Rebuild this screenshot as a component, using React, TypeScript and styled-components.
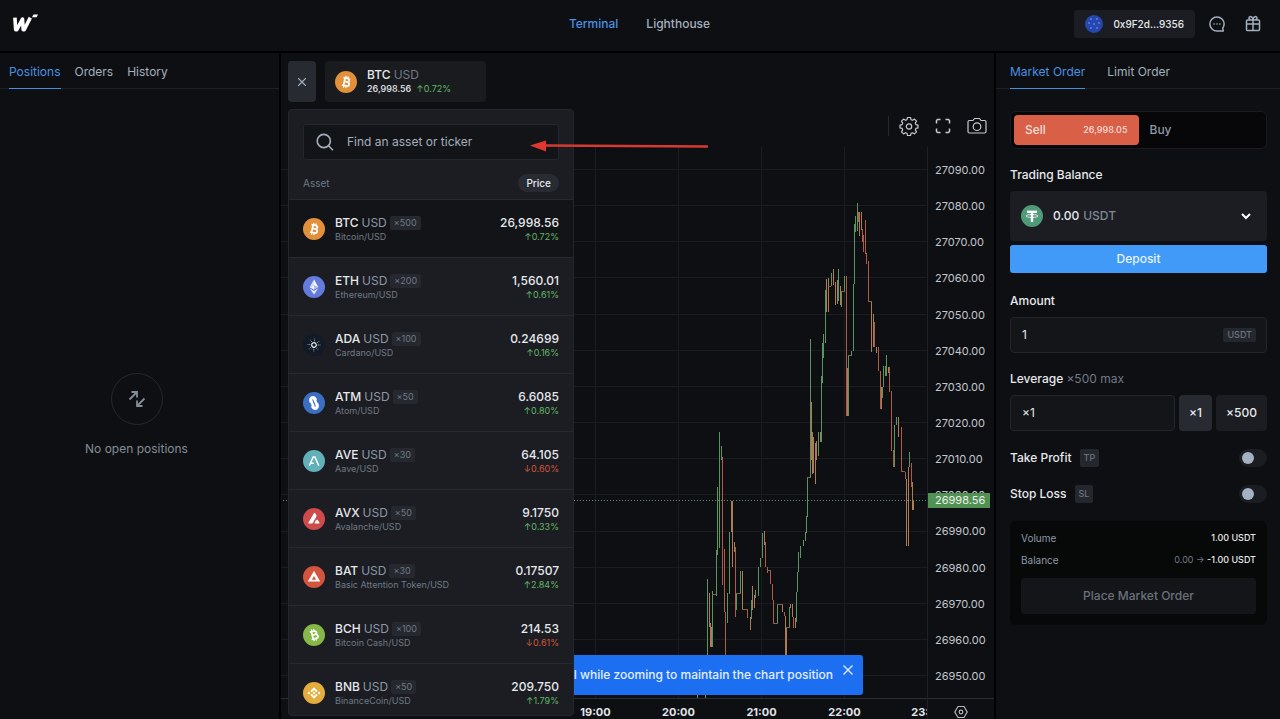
import React from "react";
import styled, { createGlobalStyle } from "styled-components";

const c = {
  bg: "#0e0f13",
  line: "#1d2025",
  card: "#1b1d22",
  raised: "#272a31",
  text: "#e6e9ed",
  soft: "#a4afbd",
  muted: "#707985",
  blue: "#4a90e2",
  action: "#419af8",
  green: "#62b866",
  red: "#d4553a",
};

const GlobalStyle = createGlobalStyle`
  *, *::before, *::after { box-sizing: border-box; }
  body {
    margin: 0;
    background: #000;
    color: ${c.text};
    font-family: Inter, "Liberation Sans", sans-serif;
    font-size: 12px;
    line-height: 16px;
    -webkit-font-smoothing: antialiased;
  }
  button, input, select { font: inherit; color: inherit; margin: 0; padding: 0; border: 0; background: none; }
  button { cursor: pointer; }
  a { color: inherit; text-decoration: none; }
  svg { display: block; flex: none; }
`;

const Page = styled.div`
  display: flex;
  flex-direction: column;
  gap: 2px;
  height: 100vh;
  min-height: 640px;
  overflow: hidden;
`;

const Header = styled.header`
  display: grid;
  grid-template-columns: 1fr auto 1fr;
  align-items: center;
  height: 51px;
  flex: none;
  padding: 0 13px 4px 12px;
  background: ${c.bg};
`;

const Nav = styled.nav`
  display: flex;
  gap: 28px;
`;

const NavLink = styled.a<{ $active?: boolean }>`
  font-weight: 500;
  color: ${(p) => (p.$active ? c.blue : c.soft)};
`;

const Actions = styled.div`
  display: flex;
  justify-content: flex-end;
  align-items: center;
  gap: 8px;
`;

const Account = styled.button`
  display: flex;
  align-items: center;
  gap: 10px;
  height: 28px;
  padding: 0 11px;
  border-radius: 4px;
  background: ${c.card};
  font-size: 10px;
  font-weight: 500;
`;

const IconButton = styled.button`
  display: grid;
  place-items: center;
  width: 28px;
  height: 28px;
  color: ${c.soft};
`;

const Columns = styled.main`
  display: grid;
  grid-template-columns: 279px minmax(0, 1fr) 284px;
  gap: 2px;
  flex: 1;
  min-height: 0;
`;

const Panel = styled.section`
  display: flex;
  flex-direction: column;
  min-width: 0;
  background: ${c.bg};
`;

const Tabs = styled.div<{ $gap: number; $pad: number }>`
  display: flex;
  gap: ${(p) => p.$gap}px;
  height: 36px;
  flex: none;
  padding: 0 ${(p) => p.$pad}px;
  border-bottom: 1px solid ${c.line};
`;

const Tab = styled.button<{ $active?: boolean }>`
  height: 36px;
  padding-top: 2px;
  border-bottom: 1px solid ${(p) => (p.$active ? c.blue : "transparent")};
  color: ${(p) => (p.$active ? c.blue : c.soft)};
`;

const Empty = styled.div`
  display: flex;
  flex-direction: column;
  flex: 1;
  align-items: center;
  justify-content: center;
  gap: 16px;
  padding: 22px 6px 0 0;
  color: #848c97;
`;

const EmptyRing = styled.div`
  display: grid;
  place-items: center;
  width: 52px;
  height: 52px;
  border: 1px solid #25282d;
  border-radius: 50%;
`;

const ChartPanel = styled(Panel)`
  position: relative;
`;

const TickerBar = styled.div`
  display: flex;
  gap: 9px;
  padding: 8px 7px 0;
`;

const CloseButton = styled.button`
  display: grid;
  place-items: center;
  width: 28px;
  height: 41px;
  border-radius: 4px;
  background: ${c.raised};
  color: ${c.soft};
`;

const Ticker = styled.div`
  display: flex;
  align-items: center;
  gap: 10px;
  width: 161px;
  height: 41px;
  padding-left: 10px;
  border-radius: 4px;
  background: #191b1f;
`;

const TickerName = styled.div`
  font-weight: 500;
  line-height: 14px;
  span { color: ${c.muted}; font-weight: 400; }
`;

const TickerPrice = styled.div`
  display: flex;
  gap: 5px;
  font-size: 9px;
  line-height: 14px;
  font-weight: 500;
`;

const Change = styled.span<{ $down?: boolean }>`
  color: ${(p) => (p.$down ? c.red : c.green)};
  font-size: 9px;
  line-height: 14px;
  font-weight: 400;
`;

const ChartTools = styled.div`
  display: flex;
  justify-content: flex-end;
  align-items: center;
  gap: 14px;
  height: 45px;
  padding: 2px 7px 0;
  color: #c5c9d0;
`;

const ToolDivider = styled.span`
  width: 1px;
  height: 20px;
  margin-right: -4px;
  background: #25282e;
`;

const ToolButton = styled.button`
  display: grid;
  place-items: center;
  width: 20px;
  height: 20px;
`;

const ChartGrid = styled.div`
  display: grid;
  grid-template-columns: minmax(0, 1fr) 67px;
  grid-template-rows: minmax(0, 1fr) 21px;
  flex: 1;
  min-height: 0;
`;

const Plot = styled.div`
  overflow: hidden;
  svg { width: 100%; }
`;

const PriceAxis = styled.div`
  position: relative;
  display: flex;
  flex-direction: column;
  justify-content: space-between;
  padding: 15px 8px 14px 7px;
  border-left: 1px solid ${c.line};
  font-size: 11px;
  color: #c3c7cd;
`;

const LastPrice = styled.div`
  position: absolute;
  top: 346px;
  left: 0;
  width: 62px;
  padding: 0 7px;
  background: #529154;
  color: #e8f2e8;
  line-height: 15px;
`;

const TimeAxis = styled.div`
  display: flex;
  justify-content: flex-end;
  overflow: hidden;
  border-top: 1px solid #2a2d33;
  padding-top: 5px;
  font-size: 11px;
  font-weight: 700;
  color: #e2e4e8;
  span { flex: none; width: 83px; text-align: center; }
  span:last-child { margin-right: -42px; }
`;

const AxisCorner = styled.div`
  display: grid;
  place-items: center;
  border-top: 1px solid #2a2d33;
  border-left: 1px solid ${c.line};
  padding-top: 6px;
`;

const Toast = styled.div`
  position: absolute;
  right: 131px;
  bottom: 24px;
  display: flex;
  gap: 9px;
  width: 518px;
  height: 40px;
  padding: 0 9px 0 12px;
  justify-content: flex-end;
  border-radius: 3px;
  background: #1d6ff2;
  color: #e4eeff;
  font-weight: 500;
  line-height: 40px;
  white-space: nowrap;
  button { height: 12px; margin-top: 9px; }
`;

const AssetMenu = styled.div`
  position: absolute;
  z-index: 2;
  top: 56px;
  left: 7px;
  bottom: 3px;
  width: 286px;
  overflow: hidden;
  border: 1px solid #23262c;
  border-radius: 4px;
  background: ${c.card};
`;

const SearchBox = styled.label`
  display: flex;
  align-items: center;
  gap: 12px;
  height: 36px;
  margin: 14px 14px 0;
  padding: 0 11px;
  border: 1px solid #24272d;
  border-radius: 3px;
  background: #131418;
  color: ${c.soft};
  input {
    flex: 1;
    min-width: 0;
    outline: none;
  }
  input::placeholder { color: ${c.soft}; opacity: 1; }
`;

const ListHead = styled.div`
  display: flex;
  justify-content: space-between;
  align-items: center;
  height: 40px;
  padding: 6px 14px 0;
  border-bottom: 1px solid #262930;
  font-size: 10px;
  color: ${c.muted};
`;

const PricePill = styled.button`
  height: 18px;
  padding: 0 8px;
  border-radius: 9px;
  background: #282b32;
  color: ${c.text};
  font-weight: 500;
`;

const AssetList = styled.ul`
  margin: 0;
  padding: 0;
  list-style: none;
`;

const AssetRow = styled.li<{ $active?: boolean }>`
  display: flex;
  align-items: center;
  gap: 10px;
  height: 58px;
  padding: 0 14px;
  border-bottom: 1px solid #262930;
  background: ${(p) => (p.$active ? "#131417" : "transparent")};
`;

const AssetText = styled.div`
  flex: 1;
  small {
    display: block;
    font-size: 9px;
    line-height: 12px;
    color: ${c.muted};
  }
`;

const AssetName = styled.div`
  display: flex;
  align-items: center;
  gap: 3px;
  font-weight: 500;
  > span { color: #8b98a8; font-weight: 400; }
`;

const Multiplier = styled.em`
  padding: 0 4px;
  border-radius: 2px;
  background: #25282e;
  color: ${c.muted};
  font-size: 9px;
  line-height: 14px;
  font-style: normal;
  font-weight: 400;
`;

const AssetPrice = styled.div`
  display: flex;
  flex-direction: column;
  align-items: flex-end;
  font-weight: 500;
  ${Change} { line-height: 12px; }
`;

const Annotation = styled.svg`
  position: absolute;
  z-index: 3;
  top: 86px;
  left: 249px;
`;

const Form = styled.form`
  display: flex;
  flex-direction: column;
  padding: 22px 13px 0 14px;
`;

const SideToggle = styled.div`
  display: flex;
  height: 38px;
  padding: 3px;
  border: 1px solid #191b1f;
  border-radius: 6px;
  background: #070709;
`;

const SideButton = styled.button<{ $active?: boolean }>`
  display: flex;
  flex: 1;
  justify-content: space-between;
  align-items: center;
  padding: 0 11px;
  border-radius: 4px;
  background: ${(p) => (p.$active ? "#d95f47" : "transparent")};
  color: ${(p) => (p.$active ? "#f6ded9" : "#8e99a7")};
  font-weight: 500;
  small { font-size: 9px; }
`;

const FieldLabel = styled.label<{ $top: number }>`
  margin: ${(p) => p.$top}px 0 8px;
  font-weight: 500;
  span { color: ${c.muted}; font-weight: 400; }
`;

const BalanceBox = styled.div`
  display: flex;
  align-items: center;
  gap: 4px;
  height: 50px;
  padding: 0 15px 0 11px;
  border-radius: 4px;
  background: ${c.card};
  font-weight: 500;
  output { margin-left: 6px; }
  select { flex: 1; appearance: none; color: #7e8894; outline: none; }
`;

const Deposit = styled.button`
  height: 28px;
  margin-top: 4px;
  border-radius: 3px;
  background: ${c.action};
  color: #e6f2ff;
  font-weight: 500;
`;

const InputBox = styled.div`
  display: flex;
  align-items: center;
  flex: 1 0 auto;
  height: 36px;
  padding: 0 10px 0 11px;
  border: 1px solid #222529;
  border-radius: 4px;
  background: #141519;
  input { flex: 1; min-width: 0; width: 0; outline: none; }
`;

const Badge = styled.span<{ $tall?: boolean }>`
  padding: 0 4px;
  border-radius: 2px;
  background: #24272d;
  color: #6b7480;
  font-size: 9px;
  font-weight: 500;
  line-height: ${(p) => (p.$tall ? 18 : 14)}px;
`;

const LeverageRow = styled.div`
  display: flex;
  gap: 4px;
`;

const QuickButton = styled.button<{ $active?: boolean }>`
  height: 36px;
  padding: 0 10px;
  border-radius: 4px;
  background: ${(p) => (p.$active ? c.raised : c.card)};
  font-weight: 500;
`;

const SwitchRow = styled.label`
  display: flex;
  align-items: center;
  gap: 8px;
  height: 18px;
  margin-top: 18px;
  font-weight: 500;
`;

const Switch = styled.input`
  appearance: none;
  width: 28px;
  height: 18px;
  margin: 0 0 0 auto;
  border-radius: 9px;
  background: ${c.card};
  &::before {
    content: "";
    display: block;
    width: 12px;
    height: 12px;
    margin: 3px;
    border-radius: 50%;
    background: #a3b1c2;
  }
  &:checked::before { margin-left: 13px; }
`;

const Summary = styled.div`
  display: flex;
  flex-direction: column;
  gap: 6px;
  margin-top: 18px;
  padding: 9px 11px 11px;
  border-radius: 6px;
  background: #070808;
`;

const SummaryRow = styled.div`
  display: flex;
  justify-content: space-between;
  font-size: 10px;
  color: #8e99a7;
  b { color: ${c.text}; font-size: 9px; font-weight: 500; }
  b span { color: ${c.muted}; font-weight: 400; }
`;

const Submit = styled.button`
  height: 36px;
  margin-top: 4px;
  border-radius: 3px;
  background: #141518;
  color: #6a727d;
  font-weight: 500;
`;

type CoinId = "btc" | "eth" | "ada" | "atm" | "ave" | "avx" | "bat" | "bch" | "bnb" | "usdt";

const coinFill: Record<CoinId, string> = {
  btc: "#e2903a", eth: "#627bdc", ada: "#111a26", atm: "#3c6fc4", ave: "#62b0b8",
  avx: "#cf4a4b", bat: "#d4543d", bch: "#86b848", bnb: "#e3ac3c", usdt: "#4f9a78",
};

const bitcoinMark = (
  <g fill="none" stroke="#fff" strokeWidth="1.7" strokeLinejoin="round">
    <path d="M7.6 7.2h4.1c3 0 3 3.6 0 3.6H9.2M9.3 7.2v7.6M7.6 14.8h4.5c3.4 0 3.4-4 0-4" />
    <path d="M9.7 5v2M12 5v2M9.7 15v2M12 15v2" strokeWidth="1.2" />
  </g>
);

const coinMark: Record<CoinId, React.ReactNode> = {
  btc: <g transform="rotate(12 11 11)">{bitcoinMark}</g>,
  bch: <g transform="rotate(-14 11 11)">{bitcoinMark}</g>,
  eth: (
    <g fill="#fff">
      <path d="M11 3.5 6.6 11.2 11 9.3z" opacity=".75" />
      <path d="m11 3.5 4.4 7.7L11 9.3z" opacity=".95" />
      <path d="M11 9.3v4.5l-4.4-2.6z" opacity=".9" />
      <path d="M11 9.3v4.5l4.4-2.6z" opacity=".5" />
      <path d="M6.6 12.3 11 18.5v-3.6zM15.4 12.3 11 18.5v-3.6z" opacity=".85" />
    </g>
  ),
  ada: (
    <g fill="none" stroke="#e4eaf0" strokeLinecap="round">
      <circle cx="11" cy="11" r="2.3" strokeWidth="1.3" strokeDasharray="1.6 .8" />
      <circle cx="11" cy="11" r="4.3" strokeWidth="1" strokeDasharray=".1 3.28" />
      <circle cx="11" cy="11" r="6" strokeWidth=".9" strokeDasharray=".1 4.61" opacity=".7" />
    </g>
  ),
  atm: (
    <g fill="none" stroke="#fff" strokeWidth="3.2" strokeLinecap="round" strokeLinejoin="round">
      <path d="M8 9.600C7.200 7.800 8 5.600 10 5.600c1.200 0 1.700.6 2.200 1.600" />
      <path d="M14 12.400c.8 1.800 0 4-2 4-1.200 0-1.700-.6-2.200-1.600" />
      <path d="m8 8.800 2.200 5M11.800 8l2.200 5" strokeWidth="2.600" />
    </g>
  ),
  ave: <path d="M6.500 15.300 10.200 7h1.700l3.700 8.300M7.900 13.200h2.300" fill="none" stroke="#fff" strokeWidth="1.400" strokeLinecap="round" />,
  avx: <path d="M10.900 5.200c.4-.7 1-.7 1.400 0l1 1.900c.3.600.3 1.100 0 1.700l-3.400 5.900c-.4.600-.8.900-1.500.9H6.200c-.8 0-1-.5-.7-1.100zM13.300 12c.4-.7 1-.7 1.400 0l1.700 2.600c.3.600 0 1-.6 1h-3.500c-.7 0-1-.4-.6-1z" fill="#fff" />,
  bat: <path fillRule="evenodd" d="m11 4.800 6.200 10.800H4.800zm0 5.200-2.200 3.700h4.400z" fill="#fff" />,
  bnb: (
    <g fill="#fff">
      <path d="m11 5.200 3.700 3.700-1.400 1.400L11 8l-2.300 2.300-1.400-1.400zM11 16.800l3.700-3.700-1.400-1.400L11 14l-2.300-2.300-1.400 1.400z" />
      <path d="m11 9.600 1.400 1.400-1.400 1.400L9.600 11zM5.900 9.600 7.300 11l-1.400 1.400L4.500 11zM16.100 9.600l1.400 1.400-1.400 1.400-1.400-1.400z" />
    </g>
  ),
  usdt: (
    <g fill="none" stroke="#fff">
      <path d="M6 6.800h10" strokeWidth="2.400" />
      <path d="M11 7v10" strokeWidth="2.400" />
      <ellipse cx="11" cy="11" rx="6" ry="1.500" strokeWidth=".8" />
    </g>
  ),
};

const Coin = ({ id }: { id: CoinId }) => (
  <svg width="22" height="22" viewBox="0 0 22 22" aria-hidden="true">
    <circle cx="11" cy="11" r="11" fill={coinFill[id]} />
    {coinMark[id]}
  </svg>
);

const Close = ({ size }: { size: number }) => (
  <svg width={size} height={size} viewBox="0 0 12 12" fill="none" stroke="currentColor" strokeWidth="1.3">
    <path d="m1.500 1.500 9 9M10.500 1.500l-9 9" />
  </svg>
);

interface Asset {
  id: CoinId;
  name: string;
  mult: number;
  full: string;
  price: string;
  change: string;
  down?: boolean;
}

const assets: Asset[] = [
  { id: "btc", name: "BTC", mult: 500, full: "Bitcoin/USD", price: "26,998.56", change: "0.72%" },
  { id: "eth", name: "ETH", mult: 200, full: "Ethereum/USD", price: "1,560.01", change: "0.61%" },
  { id: "ada", name: "ADA", mult: 100, full: "Cardano/USD", price: "0.24699", change: "0.16%" },
  { id: "atm", name: "ATM", mult: 50, full: "Atom/USD", price: "6.6085", change: "0.80%" },
  { id: "ave", name: "AVE", mult: 30, full: "Aave/USD", price: "64.105", change: "0.60%", down: true },
  { id: "avx", name: "AVX", mult: 50, full: "Avalanche/USD", price: "9.1750", change: "0.33%" },
  { id: "bat", name: "BAT", mult: 30, full: "Basic Attention Token/USD", price: "0.17507", change: "2.84%" },
  { id: "bch", name: "BCH", mult: 100, full: "Bitcoin Cash/USD", price: "214.53", change: "0.61%", down: true },
  { id: "bnb", name: "BNB", mult: 50, full: "BinanceCoin/USD", price: "209.750", change: "1.79%" },
];

const prices = Array.from({ length: 15 }, (_, i) => (27090 - i * 10).toFixed(2));
const hours = ["19:00", "20:00", "21:00", "22:00", "23:00"];

/* Bars of the price series: x, top, bottom, colour key (g, o, r). */
type Bar = [number, number, number, "g" | "o" | "r"];
const bars: Bar[] = [
  [697, 694, 698, "g"], [705, 694, 698, "g"],
  [707, 579, 655, "g"], [709, 593, 627, "o"], [710, 623, 647, "o"], [712, 591, 647, "g"], [711, 627, 647, "o"],
  [716, 550, 596, "g"], [717, 487, 555, "g"], [719, 432, 548, "g"], [721, 446, 460, "g"], [722, 457, 585, "r"],
  [724, 549, 612, "r"], [725, 612, 655, "r"], [727, 593, 623, "g"], [729, 532, 594, "g"], [731, 501, 532, "o"],
  [732, 501, 567, "o"], [734, 542, 552, "o"], [735, 547, 617, "r"], [736, 593, 610, "g"], [740, 571, 593, "g"],
  [742, 571, 609, "o"], [747, 609, 618, "r"], [750, 617, 630, "o"], [751, 600, 619, "g"], [752, 586, 610, "o"],
  [754, 595, 608, "o"], [755, 590, 598, "g"], [758, 567, 596, "g"], [760, 558, 567, "g"], [762, 533, 558, "g"],
  [764, 531, 545, "o"], [765, 542, 567, "r"], [767, 567, 573, "r"], [770, 570, 584, "r"], [772, 584, 600, "r"],
  [773, 600, 623, "r"], [777, 604, 623, "g"], [782, 604, 612, "o"], [784, 612, 616, "r"], [785, 616, 655, "o"],
  [786, 627, 655, "o"], [789, 607, 627, "g"], [790, 604, 608, "o"], [792, 604, 617, "o"], [793, 617, 628, "r"],
  [795, 618, 628, "o"], [796, 592, 622, "g"], [797, 572, 592, "g"], [798, 552, 572, "g"], [800, 546, 558, "g"],
  [803, 540, 546, "g"], [805, 532, 541, "g"], [806, 516, 533, "g"], [807, 477, 517, "g"], [810, 339, 477, "g"],
  [811, 402, 460, "o"], [812, 432, 474, "o"], [813, 437, 473, "o"], [815, 443, 484, "o"], [816, 441, 460, "o"],
  [818, 432, 456, "g"], [820, 432, 442, "o"], [821, 376, 442, "g"], [822, 343, 383, "g"], [823, 334, 358, "g"],
  [825, 290, 343, "g"], [826, 279, 312, "o"], [828, 278, 312, "o"], [831, 273, 286, "g"], [833, 269, 285, "o"],
  [835, 282, 305, "o"], [837, 280, 304, "o"], [838, 269, 301, "g"], [840, 286, 305, "o"], [841, 292, 307, "g"],
  [844, 276, 291, "g"], [846, 276, 416, "r"], [847, 368, 416, "o"], [848, 355, 416, "g"], [851, 351, 356, "g"],
  [853, 284, 351, "g"], [854, 224, 284, "g"], [855, 216, 232, "g"], [857, 203, 231, "g"], [858, 212, 222, "r"],
  [859, 212, 236, "o"], [861, 212, 230, "o"], [862, 229, 242, "r"], [863, 235, 252, "r"], [865, 220, 254, "r"],
  [866, 253, 264, "r"], [868, 261, 302, "r"], [871, 301, 352, "o"], [873, 314, 347, "o"], [874, 322, 347, "r"],
  [876, 347, 353, "o"], [878, 347, 371, "r"], [880, 371, 409, "r"], [881, 387, 409, "o"], [883, 366, 387, "g"],
  [882, 387, 398, "g"], [885, 366, 376, "g"], [886, 355, 376, "g"], [888, 367, 373, "o"], [889, 367, 392, "r"],
  [891, 391, 451, "r"], [893, 450, 467, "r"], [894, 425, 467, "g"], [896, 417, 425, "g"], [898, 417, 437, "o"],
  [901, 427, 472, "r"], [905, 472, 479, "r"], [906, 479, 546, "o"], [908, 467, 546, "o"], [909, 452, 467, "g"],
  [911, 463, 487, "r"], [912, 482, 510, "o"], [913, 500, 510, "o"],
];

/* Flat steps that join neighbouring bars: x, y, width. */
const steps: [number, number, number][] = [
  [712, 594, 4], [736, 593, 5], [742, 609, 6], [767, 570, 4], [773, 623, 5], [777, 604, 6], [786, 627, 4],
  [807, 477, 4], [828, 286, 3], [841, 291, 4], [848, 355, 3], [868, 301, 4], [901, 471, 4],
];

const barColor = { g: "#5a955f", o: "#ae7c52", r: "#b35a46" };

const PriceChart = () => (
  <svg height="551" viewBox="281 147 646 551" preserveAspectRatio="xMaxYMin meet" overflow="visible" shapeRendering="crispEdges" role="img" aria-label="BTC/USD price chart">
    <g fill="#1a1c21">
      {prices.map((p, i) => (
        <rect key={p} x="-2000" y={Math.round(169 + i * 36.15)} width="2927" height="1" />
      ))}
      {[595, 678, 761, 844].map((x) => (
        <rect key={x} x={x} y="147" width="1" height="551" />
      ))}
    </g>
    {bars.map(([x, top, bottom, k], i) => (
      <rect key={i} x={x} y={top} width="1" height={bottom - top} fill={barColor[k]} />
    ))}
    {steps.map(([x, y, w], i) => (
      <rect key={i} x={x} y={y} width={w} height="1" fill="#7d6448" />
    ))}
    <path d="M-2000 500.500H927" stroke="#5f8a68" strokeDasharray="1 2" />
  </svg>
);

export default function App() {
  return (
    <>
      <GlobalStyle />
      <Page>
        <Header>
          <a href="#home" aria-label="Home">
            <svg width="28" height="22" viewBox="0 0 28 22" fill="none" stroke="#fff">
              <path d="M2.900 4.600 3.700 16.700h1.100L10.500 6.200l.7 10.500h1L18.300 4.600" strokeWidth="3.600" strokeLinejoin="round" />
              <path d="m20 4.300 1.400-2.800H26l-1.400 2.800z" fill="#fff" stroke="none" />
            </svg>
          </a>
          <Nav>
            <NavLink href="#terminal" $active>Terminal</NavLink>
            <NavLink href="#lighthouse">Lighthouse</NavLink>
          </Nav>
          <Actions>
            <Account>
              <svg width="18" height="18" viewBox="0 0 18 18">
                <circle cx="9" cy="9" r="9" fill="#2547ae" />
                <path d="M5 3h2v2H5zM11 3h2v2h-2zM3 7h2v2H3zM13 7h2v2h-2zM8 8h2v2H8zM5 12h2v2H5zM11 12h2v2h-2z" fill="#4a70dc" />
              </svg>
              0x9F2d...9356
            </Account>
            <IconButton aria-label="Chat">
              <svg width="18" height="18" viewBox="0 0 18 18" fill="none" stroke="currentColor" strokeWidth="1.500" strokeLinejoin="round">
                <path d="M16.100 9A7.100 7.100 0 1 0 9 16.100h6.300l-.6-2.900A7 7 0 0 0 16.100 9z" />
                <path d="M5.500 9h1.200M8.400 9h1.200M11.300 9h1.200" />
              </svg>
            </IconButton>
            <IconButton aria-label="Rewards">
              <svg width="18" height="18" viewBox="0 0 18 18" fill="none" stroke="currentColor" strokeWidth="1.500" strokeLinejoin="round">
                <path d="M3.500 5h11q1 0 1 1v8.500q0 1-1 1h-11q-1 0-1-1V6q0-1 1-1zM2.500 9h13M9 5v10.500M9 5C7 5 5 4.400 5 2.900 5 .8 9 1 9 5zM9 5c2 0 4-.6 4-2.100C13 .8 9 1 9 5z" />
              </svg>
            </IconButton>
          </Actions>
        </Header>

        <Columns>
          <Panel>
            <Tabs $gap={14} $pad={9}>
              <Tab $active>Positions</Tab>
              <Tab>Orders</Tab>
              <Tab>History</Tab>
            </Tabs>
            <Empty>
              <EmptyRing>
                <svg width="18" height="18" viewBox="0 0 18 18" fill="none" stroke="currentColor" strokeWidth="1.800">
                  <path d="m1.500 9.500 7-7M3.500 2h5.500v5.500M16.500 8.500l-7 7M14.500 16H9v-5.500" />
                </svg>
              </EmptyRing>
              No open positions
            </Empty>
          </Panel>

          <ChartPanel>
            <TickerBar>
              <CloseButton aria-label="Close asset list"><Close size={10} /></CloseButton>
              <Ticker>
                <Coin id="btc" />
                <div>
                  <TickerName>BTC <span>USD</span></TickerName>
                  <TickerPrice>26,998.56 <Change>↑0.72%</Change></TickerPrice>
                </div>
              </Ticker>
            </TickerBar>
            <ChartTools>
              <ToolDivider />
              <ToolButton aria-label="Settings">
                <svg width="20" height="20" viewBox="0 0 20 20" fill="none" stroke="currentColor" strokeWidth="1.200" strokeLinejoin="round">
                  <path d="M8.500 1.500h3l.5 2.200 1.500.6 2-1.200 2 2-1.200 2 .6 1.500 2.100.5v2.800l-2.100.5-.6 1.500 1.200 2-2 2-2-1.200-1.500.6-.5 2.200h-3L8 17.300l-1.500-.6-2 1.200-2-2 1.200-2-.6-1.500-2.100-.5V9.100l2.100-.5.6-1.500-1.200-2 2-2 2 1.200L8 3.700z" />
                  <circle cx="10" cy="10.500" r="2.700" />
                </svg>
              </ToolButton>
              <ToolButton aria-label="Full screen">
                <svg width="20" height="20" viewBox="0 0 20 20" fill="none" stroke="currentColor" strokeWidth="1.500">
                  <path d="M3.500 7.500v-3l1-1h3M12.500 3.500h3l1 1v3M16.500 12.500v3l-1 1h-3M7.500 16.500h-3l-1-1v-3" />
                </svg>
              </ToolButton>
              <ToolButton aria-label="Take a snapshot">
                <svg width="20" height="20" viewBox="0 0 20 20" fill="none" stroke="currentColor" strokeWidth="1.200" strokeLinejoin="round">
                  <path d="M2.500 4.500H6l1.500-2h5l1.500 2h3.500q1.500 0 1.500 1.500v9.500q0 1.500-1.500 1.500h-15Q1 17 1 15.500V6q0-1.500 1.500-1.500z" />
                  <circle cx="10" cy="10.700" r="3.800" />
                </svg>
              </ToolButton>
            </ChartTools>
            <ChartGrid>
              <Plot><PriceChart /></Plot>
              <PriceAxis>
                {prices.map((p) => <span key={p}>{p}</span>)}
                <LastPrice>26998.56</LastPrice>
              </PriceAxis>
              <TimeAxis>{hours.map((h) => <span key={h}>{h}</span>)}</TimeAxis>
              <AxisCorner>
                <svg width="14" height="14" viewBox="0 0 14 14" fill="none" stroke="#b4b8bf" strokeWidth="1.200">
                  <path d="M4 1.500h6L13.200 7 10 12.500H4L.8 7z" />
                  <circle cx="7" cy="7" r="1.800" />
                </svg>
              </AxisCorner>
            </ChartGrid>

            <Toast role="status">
              Press and hold Ctrl while zooming to maintain the chart position
              <button aria-label="Dismiss"><Close size={12} /></button>
            </Toast>

            <AssetMenu>
              <SearchBox>
                <svg width="20" height="20" viewBox="0 0 20 20" fill="none" stroke="currentColor" strokeWidth="1.600" strokeLinecap="round">
                  <circle cx="8.800" cy="9" r="6.600" />
                  <path d="m13.800 14 3.700 3.700" />
                </svg>
                <input type="text" placeholder="Find an asset or ticker" aria-label="Find an asset or ticker" />
              </SearchBox>
              <ListHead>
                Asset
                <PricePill>Price</PricePill>
              </ListHead>
              <AssetList>
                {assets.map((a) => (
                  <AssetRow key={a.id} $active={a.id === "btc"}>
                    <Coin id={a.id} />
                    <AssetText>
                      <AssetName>
                        {a.name}
                        <span>USD</span>
                        <Multiplier>×{a.mult}</Multiplier>
                      </AssetName>
                      <small>{a.full}</small>
                    </AssetText>
                    <AssetPrice>
                      {a.price}
                      <Change $down={a.down}>{a.down ? "↓" : "↑"}{a.change}</Change>
                    </AssetPrice>
                  </AssetRow>
                ))}
              </AssetList>
            </AssetMenu>

            <Annotation width="180" height="14" viewBox="0 0 180 14" aria-hidden="true">
              <path d="M14 6.500 177 7.500" stroke="#d63a33" strokeWidth="2.400" strokeLinecap="round" />
              <path d="M0 6.500 16 1.500v11z" fill="#e0382e" />
            </Annotation>
          </ChartPanel>

          <Panel>
            <Tabs $gap={22} $pad={14}>
              <Tab $active>Market Order</Tab>
              <Tab>Limit Order</Tab>
            </Tabs>
            <Form onSubmit={(e) => e.preventDefault()}>
              <SideToggle>
                <SideButton type="button" $active>Sell <small>26,998.05</small></SideButton>
                <SideButton type="button">Buy</SideButton>
              </SideToggle>

              <FieldLabel htmlFor="currency" $top={18}>Trading Balance</FieldLabel>
              <BalanceBox>
                <Coin id="usdt" />
                <output>0.00</output>
                <select id="currency"><option>USDT</option></select>
                <svg width="12" height="12" viewBox="0 0 12 12" fill="none" stroke="#fff" strokeWidth="2">
                  <path d="m2 4 4 4 4-4" />
                </svg>
              </BalanceBox>
              <Deposit type="button">Deposit</Deposit>

              <FieldLabel htmlFor="amount" $top={20}>Amount</FieldLabel>
              <InputBox>
                <input id="amount" type="text" defaultValue="1" />
                <Badge>USDT</Badge>
              </InputBox>

              <FieldLabel htmlFor="leverage" $top={18}>Leverage <span>×500 max</span></FieldLabel>
              <LeverageRow>
                <InputBox>
                  <input id="leverage" type="text" defaultValue="×1" />
                </InputBox>
                <QuickButton type="button" $active>×1</QuickButton>
                <QuickButton type="button">×500</QuickButton>
              </LeverageRow>

              <SwitchRow>Take Profit <Badge $tall>TP</Badge><Switch type="checkbox" /></SwitchRow>
              <SwitchRow>Stop Loss <Badge $tall>SL</Badge><Switch type="checkbox" /></SwitchRow>

              <Summary>
                <SummaryRow>Volume <b>1.00 USDT</b></SummaryRow>
                <SummaryRow>Balance <b><span>0.00 →</span> -1.00 USDT</b></SummaryRow>
                <Submit type="submit">Place Market Order</Submit>
              </Summary>
            </Form>
          </Panel>
        </Columns>
      </Page>
    </>
  );
}
